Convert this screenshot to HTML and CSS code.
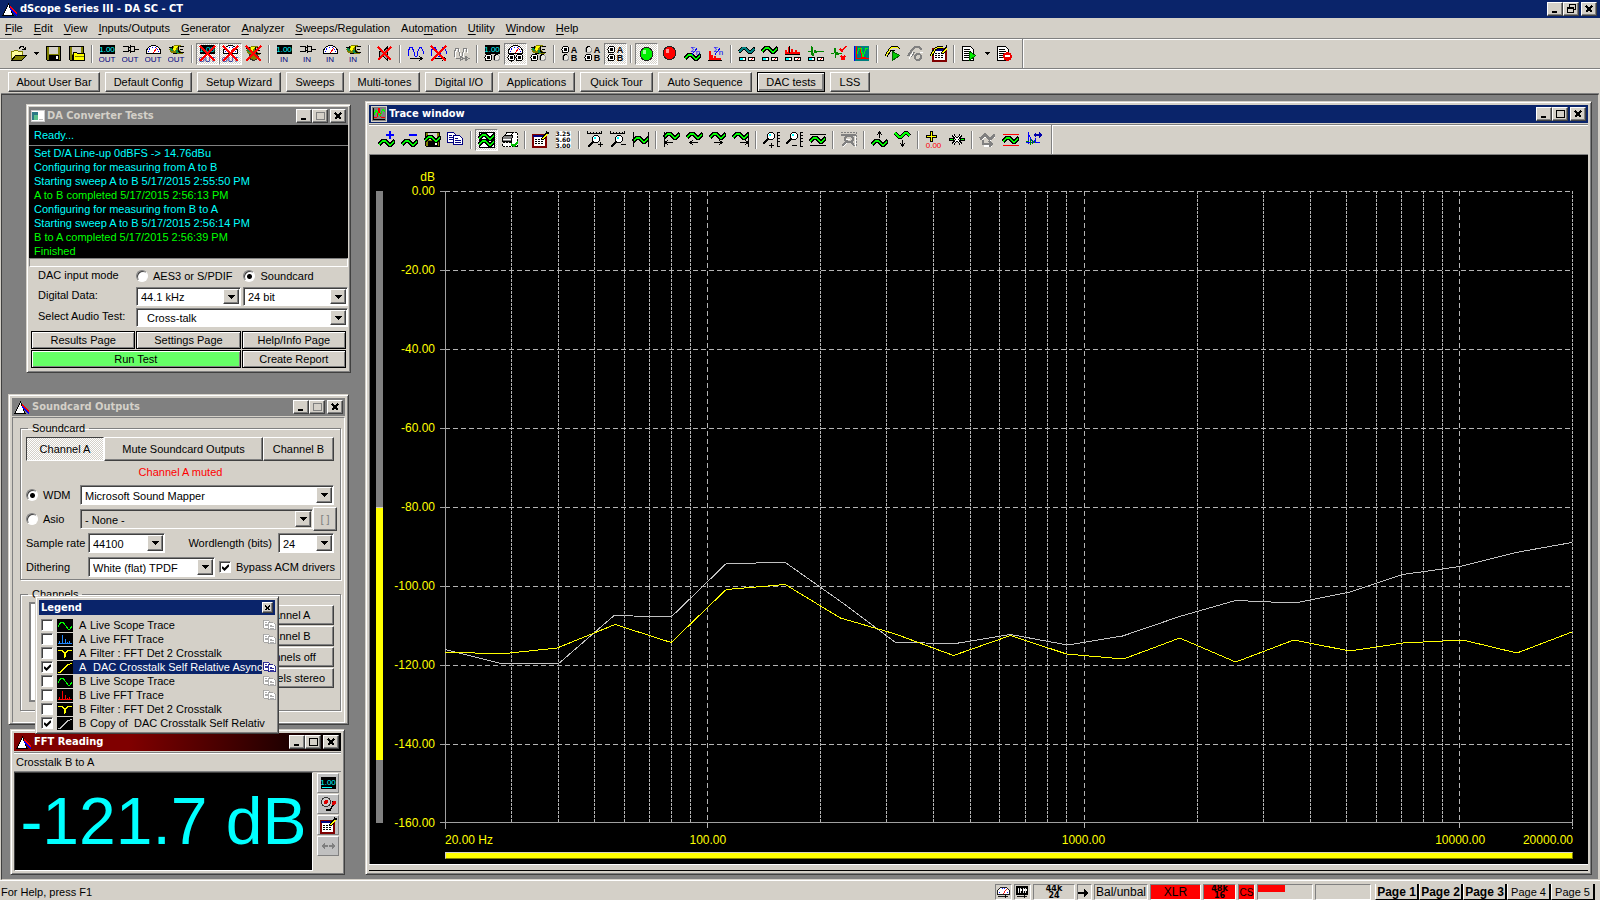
FILE: index.html
```html
<!DOCTYPE html>
<html lang="en">
<head>
<meta charset="utf-8">
<title>dScope Series III - DA SC - CT</title>
<link rel="stylesheet" href="styles.css">
</head>
<body>
<svg class="defs" aria-hidden="true">
  <defs>
    <!-- shared pieces -->
    <g id="p-num"><path d="M1 0h15v9H1z"/><text class="t7 cy" x="8" y="7">1.00</text></g>
    <g id="p-cable" fill="none" stroke="#000"><path d="M1 1.500h5v3M1 6.500h5v-2M6 2.500h2M6 5.500h2M8.500 0v8M8.500 1.500h4v5h-4M12.500 4.500h4"/></g>
    <g id="p-gauge"><path fill="#fff" stroke="#000" d="M1.500 8.500v-3l1-2l2-2l3-1h2l3 1l2 2l1 2v3z"/><path fill="none" stroke="#00f" stroke-dasharray="1 2" d="M3.500 7v-2l3-2.500h4l3 2.500v2"/><path stroke="#f00" d="M8 8l4-5"/></g>
    <g id="p-fish"><path fill="#808000" d="M1 4l3-3 4-1h5l-2 3 1 3 3 3H7L3 8z"/><path fill="#ff0" d="M6 1h4l-2 3-1 3-2-2z"/><path fill="#0a8a4a" d="M1 4l3-2 1 3-1 2zM8 5h3v3H8z"/><path fill="none" stroke="#000" d="M1 2.500h3M4 1v3M11 1l-1 4 2 3M12 1.500h4M12 4.500h3M12 7.500h4M5 8.500h4"/></g>
    <g id="p-x" fill="none" stroke="#f00" stroke-width="1.500"><path d="M1 1l15 15M16 1L1 16"/></g>
    <g id="p-on"><circle cx="4.500" cy="4.500" r="3.500" fill="#fff" stroke="#000"/><circle cx="4.500" cy="4.500" r="1.500"/></g>
    <g id="p-off"><circle cx="4.500" cy="4.500" r="3" fill="#e8e6e0" stroke="#999"/><path fill="none" stroke="#000" d="M2 6.500v-3l2-2h2"/></g>
    <g id="p-wave"><path fill="none" stroke="#000" stroke-width="4" d="M1 9.500l4-4h2l4 4h2l4-4"/><path fill="none" stroke="#0f0" stroke-width="2" d="M1 9.500l4-4h2l4 4h2l3-3"/></g>
    <g id="p-two"><path fill="#fff" stroke="#000" d="M1.500 12.500h6v3h-6zM10.500 12.500h6v3h-6z"/><path fill="#0ff" d="M2 13h3v2H2z"/><path stroke="#f00" d="M13 15l2-2"/></g>
    <g id="p-sig"><text x="9" y="7" class="t8 sig">Σ</text><path fill="none" stroke="#00f" d="M8 9.500l5-6"/><text x="14" y="10" class="t8 sig">n</text></g>
    <g id="p-lens"><path fill="#fff" stroke="#000" d="M6.500 6.500l2-2h3l2 2v3l-2 2h-3l-2-2z"/><path fill="#0ff" d="M8 6h2v2H8z"/><path stroke="#000" stroke-width="2" d="M7 11l-5 5"/></g>
    <g id="p-page"><path fill="#fff" stroke="#000" d="M1.500 1.500h8l3 3v11h-11z"/><path stroke="#000" d="M3 4.500h6M3 6.500h7M3 8.500h7M3 10.500h7M3 12.500h7"/></g>
    <g id="p-copy" fill="#fff" stroke="currentColor"><path d="M.5 1.500h6l2 2v8h-8z"/><path d="M2 4.500h3M2 6.500h5M2 8.500h5"/><path d="M6.500 4.500h6l3 3v6h-9z"/><path d="M8 7.500h3M8 9.500h6M8 11.500h6"/></g>
    <g id="p-notes"><path fill="#fff" stroke="#800000" stroke-width="2" d="M1 4h13v12H1z"/><path fill="#000080" d="M1 4h13v2H1z"/><path fill="none" stroke="#000" stroke-dasharray="2 1" d="M3 8.500h9M3 10.500h9M3 12.500h9"/><path stroke="#000" stroke-width="3" d="M10 9l6-8"/><path stroke="#ff0" stroke-width="1.500" d="M11 8l4-5"/></g>
    <!-- main toolbar -->
    <symbol id="open" viewBox="0 0 17 17"><path fill="#ffff9c" stroke="#808000" d="M1.500 14.500v-8h2l1-1h3l1 1h4v3"/><path fill="#808000" stroke="#000" d="M1.500 15.500l4-5h11l-5 5z"/><path fill="none" stroke="#000" d="M9 3.500l2-2h2l2 3M12 4.500h3.500V2"/></symbol>
    <symbol id="save" viewBox="0 0 17 17"><path fill="#808000" stroke="#000" d="M1.500 1.500h14v14h-13l-1-1z"/><path fill="#d4d0c8" d="M4 2h9v7H4z"/><path d="M4 10h10v5H4z"/><path fill="#fff" d="M11 11h2v3h-2z"/></symbol>
    <symbol id="saveall" viewBox="0 0 17 17"><use href="#save"/><path fill="#ff0" stroke="#000" d="M5.500 15.500v-8h3l1 1h7v7z"/><path stroke="#808000" d="M7 11.500h9"/></symbol>
    <symbol id="num-out" viewBox="0 0 17 17"><use href="#p-num"/><text class="t7 nv" x="8" y="17">OUT</text></symbol>
    <symbol id="cable-out" viewBox="0 0 17 17"><use href="#p-cable"/><text class="t7 nv" x="8" y="17">OUT</text></symbol>
    <symbol id="gauge-out" viewBox="0 0 17 17"><use href="#p-gauge"/><text class="t7 nv" x="8" y="17">OUT</text></symbol>
    <symbol id="fish-out" viewBox="0 0 17 17"><use href="#p-fish"/><text class="t7 nv" x="8" y="17">OUT</text></symbol>
    <symbol id="num-x" viewBox="0 0 17 17"><use href="#num-out"/><use href="#p-x"/></symbol>
    <symbol id="gauge-x" viewBox="0 0 17 17"><use href="#gauge-out"/><use href="#p-x"/></symbol>
    <symbol id="fish-x" viewBox="0 0 17 17"><use href="#p-fish" y="1"/><path fill="#808000" stroke="#333" d="M4.500 9.500h8l1 4-5 2-4-2z"/><use href="#p-x"/></symbol>
    <symbol id="num-in" viewBox="0 0 17 17"><use href="#p-num"/><text class="t7 nv" x="8" y="17">IN</text></symbol>
    <symbol id="cable-in" viewBox="0 0 17 17"><use href="#p-cable"/><text class="t7 nv" x="8" y="17">IN</text></symbol>
    <symbol id="gauge-in" viewBox="0 0 17 17"><use href="#p-gauge"/><text class="t7 nv" x="8" y="17">IN</text></symbol>
    <symbol id="fish-in" viewBox="0 0 17 17"><use href="#p-fish"/><text class="t7 nv" x="8" y="17">IN</text></symbol>
    <symbol id="mute" viewBox="0 0 17 17"><path fill="#999" stroke="#000" d="M3.500 6.500h4l4-5v14l-4-4h-4z"/><path fill="none" stroke="#f00" stroke-width="1.500" d="M2 2l13 13M15 2L2 15"/></symbol>
    <symbol id="sine" viewBox="0 0 17 17"><path fill="none" stroke="#00f" d="M1 11V7l2-5h2l2 5 1 4h2l1-5 2-4h1l2 4v3"/><path fill="none" stroke="#000" d="M3 13.500h11M12 11l3 2.500-3 2.500"/></symbol>
    <symbol id="sine-x" viewBox="0 0 17 17"><use href="#sine"/><use href="#p-x"/></symbol>
    <symbol id="sine-off" viewBox="0 0 17 17"><path fill="none" stroke="#fff" d="M2 13V9l2-5h2l1 4 1 4h2l2-8h2l1 4"/><path fill="none" stroke="#808080" d="M1 12V8l2-5h2l1 4 1 4h2l2-8h2l1 4M3 13.500h5M10 13.500h4M7 11l3 2.500-3 2.500zM12 11l4 2.500-4 2.500z"/></symbol>
    <symbol id="num-sel" viewBox="0 0 17 17"><use href="#p-num"/><use href="#p-on" y="8"/><use href="#p-off" x="8" y="8"/></symbol>
    <symbol id="gauge-sel" viewBox="0 0 17 17"><use href="#p-gauge"/><use href="#p-on" y="8"/><use href="#p-on" x="8" y="8"/></symbol>
    <symbol id="fish-sel" viewBox="0 0 17 17"><use href="#p-fish"/><use href="#p-on" y="8"/><use href="#p-off" x="8" y="8"/></symbol>
    <symbol id="ab-a" viewBox="0 0 17 17"><use href="#p-on"/><use href="#p-off" y="8"/><text class="ab" x="13" y="8">A</text><text class="ab" x="13" y="16">B</text></symbol>
    <symbol id="ab-b" viewBox="0 0 17 17"><use href="#p-off"/><use href="#p-on" y="8"/><text class="ab" x="13" y="8">A</text><text class="ab" x="13" y="16">B</text></symbol>
    <symbol id="ab-both" viewBox="0 0 17 17"><use href="#p-on"/><use href="#p-on" y="8"/><text class="ab" x="13" y="8">A</text><text class="ab" x="13" y="16">B</text></symbol>
    <symbol id="led-green" viewBox="0 0 17 17"><circle cx="8.500" cy="9" r="6.500" fill="#00f000" stroke="#222"/><circle cx="6.500" cy="7" r="2" fill="#9f9"/></symbol>
    <symbol id="led-red" viewBox="0 0 17 17"><circle cx="8.500" cy="8" r="6.500" fill="#f00" stroke="#222"/><circle cx="6.500" cy="6" r="2" fill="#f99"/></symbol>
    <symbol id="sig-wave" viewBox="0 0 17 17"><use href="#p-wave" y="4"/><use href="#p-sig"/></symbol>
    <symbol id="sig-fft" viewBox="0 0 17 17"><path fill="none" stroke="#f00" stroke-width="2" d="M3 15V6M3 14h11M5 14v-4M8 14v-3"/><path stroke="#000" d="M1 15.500h14"/><use href="#p-sig"/></symbol>
    <symbol id="tr-scope" viewBox="0 0 17 17"><path fill="none" stroke="#000" stroke-width="3" d="M1 7l4-4h2l4 4h2l4-4"/><path fill="none" stroke="#008080" stroke-width="2" d="M1 7l4-4h2l4 4h2l3-3"/><use href="#p-two"/></symbol>
    <symbol id="tr-live" viewBox="0 0 17 17"><use href="#p-wave" y="-3"/><use href="#p-two"/></symbol>
    <symbol id="tr-fft" viewBox="0 0 17 17"><path fill="none" stroke="#f00" stroke-width="2" d="M2 8V5M5 8V2M8 8V4M12 8V5M1 8h15"/><path stroke="#000" d="M1 9.500h15M5.500 1v7"/><use href="#p-two"/></symbol>
    <symbol id="tr-imp" viewBox="0 0 17 17"><path fill="none" stroke="#080" d="M1 6.500h3l1-5 1 9 2-5 1 2 1-1h7M4.500 1v9"/><use href="#p-two"/></symbol>
    <symbol id="tr-lim" viewBox="0 0 17 17"><path fill="none" stroke="#080" d="M1 8.500h3l1-5v9l2-5 1 2 1-1h3M5.500 3v9"/><path fill="none" stroke="#f00" stroke-width="1.500" d="M10 4l2 2 4-5M11 11l4 4M15 11l-4 4"/></symbol>
    <symbol id="tr-plot" viewBox="0 0 17 17"><path fill="#008080" d="M1 1h15v15H1z"/><path fill="none" stroke="#f00" d="M3.500 1v12.500h12M7.500 2l1 11 4-1"/><path fill="none" stroke="#0f0" d="M4 9l2-6h2l2 9 3-9h2"/><path stroke="#00f" d="M1.500 1v15"/></symbol>
    <symbol id="sweep-go" viewBox="0 0 17 17"><path fill="none" stroke="#000" d="M1 11l4-7 3-3h5l3 3M3 12l4-7h4"/><path fill="none" stroke="#ff0" d="M2 11l4-7 3-2h4l2 2"/><path fill="#0c0" stroke="#060" d="M8.500 6.500l7 4-7 5z"/></symbol>
    <symbol id="sweep-off" viewBox="0 0 17 17"><path fill="none" stroke="#808080" stroke-width="2" d="M1 11l4-6 3-3h4l3 3M4 12l3-5"/><circle cx="11" cy="12" r="3" fill="none" stroke="#808080" stroke-width="2"/><path stroke="#fff" d="M2 14l4-7M13 7h3"/></symbol>
    <symbol id="sweep-set" viewBox="0 0 17 17"><use href="#p-notes" x="2"/><path fill="none" stroke="#000" stroke-width="3" d="M1 11l4-7 4-2h4"/><path fill="none" stroke="#ff0" d="M1 11l4-7 4-2h4"/></symbol>
    <symbol id="script-go" viewBox="0 0 17 17"><use href="#p-page"/><path fill="#0e0" stroke="#060" d="M8.500 6.500l6 4-6 5z"/></symbol>
    <symbol id="script-stop" viewBox="0 0 17 17"><use href="#p-page"/><circle cx="11.500" cy="11.500" r="4.500" fill="#e00"/><path fill="#fff" d="M9 10h5v2H9z"/></symbol>
    <!-- trace toolbar -->
    <symbol id="w-add" viewBox="0 0 17 17"><use href="#p-wave" y="4"/><path fill="#00f" d="M11 0h2v8h-2zM8 3h8v2H8z"/></symbol>
    <symbol id="w-sub" viewBox="0 0 17 17"><use href="#p-wave" y="4"/><path fill="#00f" d="M8 3h8v2H8z"/></symbol>
    <symbol id="w-save" viewBox="0 0 17 17"><use href="#save"/><use href="#p-wave"/></symbol>
    <symbol id="w-copy" viewBox="0 0 17 17"><use href="#p-copy"/></symbol>
    <symbol id="w-show" viewBox="0 0 17 17"><path fill="#fff" stroke="#000" d="M1.500 1.500h15v15h-15z"/><use href="#p-wave" y="-2"/><use href="#p-wave" y="4"/></symbol>
    <symbol id="w-print" viewBox="0 0 17 17"><path fill="#fff" stroke="#000" stroke-dasharray="2 1" d="M10.500 1.500h6v14h-15v-4h9z"/><path fill="#808080" stroke="#000" d="M1.500 6.500l2-2h8l-1 6h-9z"/><path fill="#fff" stroke="#000" d="M4.500 4.500l1-3h6l-1 3z"/><path stroke="#fff" d="M2 8.500h8"/><path fill="none" stroke="#0b0" stroke-width="2" d="M10 13l3 2 4-4"/></symbol>
    <symbol id="w-notes" viewBox="0 0 17 17"><use href="#p-notes"/></symbol>
    <symbol id="w-digits" viewBox="0 0 17 17"><path fill="#fff" d="M1 0h15v17H1z"/><text class="t7b" x="8" y="5">3.25</text><text class="t7b" x="8" y="11">5.60</text><text class="t7b" x="8" y="17">3.00</text></symbol>
    <symbol id="zx-in" viewBox="0 0 17 17"><path fill="none" stroke="#000" d="M1 2.500h15M1.500 0v3M4.500 1v2M7.500 1v2M10.500 1v2M13.500 1v2M15.500 0v3M12 13.500h5M14.500 11v5"/><use href="#p-lens"/></symbol>
    <symbol id="zx-out" viewBox="0 0 17 17"><path fill="none" stroke="#000" d="M1 2.500h15M1.500 0v3M4.500 1v2M7.500 1v2M10.500 1v2M13.500 1v2M15.500 0v3M12 13.500h5"/><use href="#p-lens"/></symbol>
    <symbol id="fit-x" viewBox="0 0 17 17"><use href="#p-wave" y="1"/><path stroke="#000" d="M1.500 1v15M16.500 1v15"/></symbol>
    <symbol id="go-first" viewBox="0 0 17 17"><use href="#p-wave" y="-3"/><path fill="none" stroke="#000" d="M1.500 1v15M2 11.500h8M5 9l-3 2.500L5 14"/></symbol>
    <symbol id="go-left" viewBox="0 0 17 17"><use href="#p-wave" y="-3"/><path fill="none" stroke="#000" d="M4 11.500h8M7 9l-3 2.500L7 14"/></symbol>
    <symbol id="go-right" viewBox="0 0 17 17"><use href="#p-wave" y="-3"/><path fill="none" stroke="#000" d="M5 11.500h8M10 9l3 2.500-3 2.500"/></symbol>
    <symbol id="go-last" viewBox="0 0 17 17"><use href="#p-wave" y="-3"/><path fill="none" stroke="#000" d="M16.500 1v15M8 11.500h8M13 9l3 2.500-3 2.500"/></symbol>
    <symbol id="zy-in" viewBox="0 0 17 17"><path fill="none" stroke="#000" d="M17 1.500h-2.500v14H17M15 4.500h2M15 7.500h2M15 10.500h2M6 14.500h5M8.500 12v5"/><use href="#p-lens" x="-2" y="-3"/></symbol>
    <symbol id="zy-out" viewBox="0 0 17 17"><path fill="none" stroke="#000" d="M17 1.500h-2.500v14H17M15 4.500h2M15 7.500h2M15 10.500h2M6 14.500h5"/><use href="#p-lens" x="-2" y="-3"/></symbol>
    <symbol id="fit-y" viewBox="0 0 17 17"><use href="#p-wave" y="1"/><path stroke="#000" d="M1 3.500h16M1 14.500h16"/></symbol>
    <symbol id="z-off" viewBox="0 0 17 17"><path fill="none" stroke="#fff" d="M3 16l5-5M6 8h4M15 5v11"/><path fill="none" stroke="#808080" stroke-dasharray="2 1" d="M1 1.500h15.500v14"/><path fill="none" stroke="#808080" stroke-width="2" d="M1 4h15M2 15l5-5M5 7l2-2h4l2 2v2l-2 2H8L5 9zM11 10l3 5"/></symbol>
    <symbol id="w-up" viewBox="0 0 17 17"><use href="#p-wave" y="4"/><path fill="none" stroke="#000" d="M8.500 1v6M6 4l2.500-3L11 4"/></symbol>
    <symbol id="w-down" viewBox="0 0 17 17"><path fill="none" stroke="#000" stroke-width="4" d="M1 2l4 4h2l4-4h2l3 3"/><path fill="none" stroke="#0f0" stroke-width="2" d="M1 2l4 4h2l4-4h2l3 3"/><path fill="none" stroke="#000" d="M8.500 9v6M6 12l2.500 3 2.500-3"/></symbol>
    <symbol id="cur-val" viewBox="0 0 17 17"><path fill="#ff0" stroke="#000" d="M5.500.5h2v4h4v2h-4v4h-2v-4h-4v-2h4z"/><text class="t8 rd" x="8.500" y="17">0.00</text></symbol>
    <symbol id="cur-mid" viewBox="0 0 17 17"><path fill="#0f0" stroke="#000" d="M1.500 7.500h4v2h-4zM12.500 7.500h4v2h-4z"/><path fill="none" stroke="#000" stroke-width="3" d="M5 4l8 9M13 4l-8 9"/><path fill="none" stroke="#fff" d="M5 4l8 9M13 4l-8 9"/></symbol>
    <symbol id="reg-off" viewBox="0 0 17 17"><path fill="none" stroke="#fff" stroke-width="2" d="M2 9l4-4 5 4 5-4M5 15h8"/><path fill="none" stroke="#808080" stroke-width="3" d="M1 8l5-4 5 4 5-4"/><path fill="none" stroke="#808080" stroke-width="2" d="M4 9v4h8M10 10l3 3-3 3"/></symbol>
    <symbol id="w-limits" viewBox="0 0 17 17"><use href="#p-wave" y="1"/><path stroke="#f00" d="M1 3.500h16M1 14.500h16"/></symbol>
    <symbol id="w-window" viewBox="0 0 17 17"><path fill="none" stroke="#00f" d="M3.500 1v12M3 2l3 6 2 4 2-3v3M1 11.500h14"/><path fill="none" stroke="#080" d="M5.500 8v6M7.500 9v4M9.500 10v2M1 10.500h3"/><path fill="#00a" d="M8 4l3-3v2h3V1l3 3-3 3V5h-3v2z"/></symbol>
    <!-- legend thumbnails -->
    <symbol id="th-scope" viewBox="0 0 16 13"><path d="M0 0h16v13H0z"/><path fill="none" stroke="currentColor" d="M1 8l3-5h2l5 7h2l2-3"/></symbol>
    <symbol id="th-fft" viewBox="0 0 16 13"><path d="M0 0h16v13H0z"/><path fill="none" stroke="currentColor" d="M1 10.500h14M2.500 8v3M5.500 2v9M8.500 6v5M10.500 9v2M12.500 8v3"/></symbol>
    <symbol id="th-filter" viewBox="0 0 16 13"><path d="M0 0h16v13H0z"/><path fill="none" stroke="currentColor" d="M1 3.500h4l2 2 1 5 1-5 2-2h4"/></symbol>
    <symbol id="th-ramp" viewBox="0 0 16 13"><path d="M0 0h16v13H0z"/><path fill="none" stroke="currentColor" d="M1 11.500h2l8-8 4-1"/></symbol>
    <!-- window furniture -->
    <symbol id="logo" viewBox="0 0 16 13"><path fill="#fff" stroke="#000" d="M1 12.500L6.500 1 11 12.500z"/><path stroke="#f00" stroke-width="1.500" d="M8 4l7 6"/><path stroke="#00f" stroke-width="1.500" d="M8 6l7 6"/></symbol>
    <symbol id="min" viewBox="0 0 12 10"><path d="M3 7h5v2H3z"/></symbol>
    <symbol id="max" viewBox="0 0 12 10"><path fill="none" stroke="currentColor" d="M2.500 1.500h8v7h-8zM2 1h9"/></symbol>
    <symbol id="restore" viewBox="0 0 12 10"><path fill="none" stroke="#000" d="M4.500 3V.5h6v5H9M2.500 4.500h6v4h-6zM2 3.500h7"/></symbol>
    <symbol id="close" viewBox="0 0 12 10"><path fill="none" stroke="#000" stroke-width="1.500" d="M3 2l6 6M9 2L3 8"/></symbol>
    <symbol id="down" viewBox="0 0 7 4"><path d="M0 0h7L3.500 4z"/></symbol>
    <symbol id="plot-icon" viewBox="0 0 16 16"><path fill="#808080" stroke="#d4d0c8" d="M.5.5h15v15H.5z"/><path fill="none" stroke="#000" d="M2.500 2v11.500H14"/><path fill="none" stroke="#f00" d="M3 11h3l2-9 2 9h4"/><path fill="none" stroke="#0f0" d="M3 9l2-5 4 6 3-7 2 3"/></symbol>
    <symbol id="app-icon" viewBox="0 0 14 12"><path fill="#fff" stroke="#ccc" d="M.5.5h13v11H.5z"/><path fill="#2b7a86" d="M1 2h6v8H1z"/><path fill="#5ac08c" d="M3 5h4v5H3z"/><path fill="#bbb" d="M8 9h4v1H8z"/></symbol>
    <symbol id="bell" viewBox="0 0 17 17"><circle cx="6" cy="6" r="4.500" fill="#ccc" stroke="#333"/><circle cx="6" cy="6" r="2" fill="#d00"/><path fill="none" stroke="#000" stroke-width="1.500" d="M6 14h4l3-5V5"/><circle cx="14" cy="7" r="2" fill="#d00"/></symbol>
    <symbol id="arrows" viewBox="0 0 17 17"><path fill="#808080" d="M1 8l4-3v2h3v2H5v2zM16 8l-4-3v2H9v2h3v2z"/></symbol>
    <symbol id="dig" viewBox="0 0 17 17"><path d="M1 2h15v12H1z"/><text class="t7 cy" x="8" y="10">1.00</text><path stroke="#0ff" d="M2 12.500h10"/></symbol>
    <symbol id="st-gauge" viewBox="0 0 16 16"><use href="#p-gauge" y="2"/><path stroke="#000" d="M2 13.500h12M11 11v4"/></symbol>
    <symbol id="st-num" viewBox="0 0 16 16"><path d="M1 1h14v10H1z"/><path stroke="#fff" stroke-width="2" stroke-dasharray="2 1" d="M3 6h11"/><path stroke="#fff" d="M3.500 3v6M6.500 3v6M9.500 3v6M12.500 3v6"/><path stroke="#000" d="M2 13.500h12M11 11v4"/></symbol>
    <symbol id="st-arrow" viewBox="0 0 12 12"><path d="M0 5h6V2l5 4-5 4V7H0z"/></symbol>
  </defs>
</svg>

<header class="titlebar app-title">
  <svg class="logo"><use href="#logo"/></svg><h1>dScope Series III - DA SC - CT</h1>
  <div class="winbtns"><button aria-label="Minimize"><svg><use href="#min"/></svg></button><button aria-label="Restore"><svg><use href="#restore"/></svg></button><button class="x" aria-label="Close"><svg><use href="#close"/></svg></button></div>
</header>

<nav class="menu">
  <button><u>F</u>ile</button><button><u>E</u>dit</button><button><u>V</u>iew</button><button><u>I</u>nputs/Outputs</button><button><u>G</u>enerator</button><button><u>A</u>nalyzer</button><button><u>S</u>weeps/Regulation</button><button>Auto<u>m</u>ation</button><button><u>U</u>tility</button><button><u>W</u>indow</button><button><u>H</u>elp</button>
</nav>

<div class="toolbar main-tools">
  <button class="tb" aria-label="Open"><svg><use href="#open"/></svg></button><button class="tb drop" aria-label="Open recent"><svg><use href="#down"/></svg></button><button class="tb" aria-label="Save"><svg><use href="#save"/></svg></button><button class="tb" aria-label="Save all"><svg><use href="#saveall"/></svg></button><i></i>
  <button class="tb" aria-label="Digital outputs"><svg><use href="#num-out"/></svg></button><button class="tb" aria-label="Analogue outputs"><svg><use href="#cable-out"/></svg></button><button class="tb" aria-label="Output meter"><svg><use href="#gauge-out"/></svg></button><button class="tb" aria-label="Output carrier"><svg><use href="#fish-out"/></svg></button><i></i>
  <button class="tb on" aria-label="Mute digital"><svg><use href="#num-x"/></svg></button><button class="tb on" aria-label="Mute analogue"><svg><use href="#gauge-x"/></svg></button><button class="tb" aria-label="Mute carrier"><svg><use href="#fish-x"/></svg></button><i></i>
  <button class="tb" aria-label="Digital inputs"><svg><use href="#num-in"/></svg></button><button class="tb" aria-label="Analogue inputs"><svg><use href="#cable-in"/></svg></button><button class="tb" aria-label="Input meter"><svg><use href="#gauge-in"/></svg></button><button class="tb" aria-label="Input carrier"><svg><use href="#fish-in"/></svg></button><i></i>
  <button class="tb" aria-label="Monitor mute"><svg><use href="#mute"/></svg></button><i></i>
  <button class="tb" aria-label="Generator"><svg><use href="#sine"/></svg></button><button class="tb" aria-label="Generator off"><svg><use href="#sine-x"/></svg></button><button class="tb" aria-label="Next"><svg><use href="#sine-off"/></svg></button><i></i>
  <button class="tb" aria-label="Analyze digital"><svg><use href="#num-sel"/></svg></button><button class="tb on" aria-label="Analyze analogue"><svg><use href="#gauge-sel"/></svg></button><button class="tb" aria-label="Analyze carrier"><svg><use href="#fish-sel"/></svg></button><i></i>
  <button class="tb" aria-label="Channel A"><svg><use href="#ab-a"/></svg></button><button class="tb" aria-label="Channel B"><svg><use href="#ab-b"/></svg></button><button class="tb on" aria-label="Both channels"><svg><use href="#ab-both"/></svg></button><i></i>
  <button class="tb on" aria-label="Run"><svg><use href="#led-green"/></svg></button><button class="tb" aria-label="Stop"><svg><use href="#led-red"/></svg></button><button class="tb" aria-label="Average scope"><svg><use href="#sig-wave"/></svg></button><button class="tb" aria-label="Average FFT"><svg><use href="#sig-fft"/></svg></button><i></i>
  <button class="tb" aria-label="Signal"><svg><use href="#tr-scope"/></svg></button><button class="tb" aria-label="Scope trace"><svg><use href="#tr-live"/></svg></button><button class="tb" aria-label="FFT trace"><svg><use href="#tr-fft"/></svg></button><button class="tb" aria-label="Impulse"><svg><use href="#tr-imp"/></svg></button><button class="tb" aria-label="Limits"><svg><use href="#tr-lim"/></svg></button><button class="tb" aria-label="Trace window"><svg><use href="#tr-plot"/></svg></button><i></i>
  <button class="tb" aria-label="Start sweep"><svg><use href="#sweep-go"/></svg></button><button class="tb" aria-label="Stop sweep"><svg><use href="#sweep-off"/></svg></button><button class="tb" aria-label="Sweep settings"><svg><use href="#sweep-set"/></svg></button><i></i>
  <button class="tb" aria-label="Run script"><svg><use href="#script-go"/></svg></button><button class="tb drop" aria-label="Recent scripts"><svg><use href="#down"/></svg></button><button class="tb" aria-label="Stop script"><svg><use href="#script-stop"/></svg></button><i class="end"></i>
</div>

<div class="userbar">
  <button class="w92">About User Bar</button><button class="w87">Default Config</button><button class="w84">Setup Wizard</button><button class="w58">Sweeps</button><button class="w71">Multi-tones</button><button class="w68">Digital I/O</button><button class="w77">Applications</button><button class="w73">Quick Tour</button><button class="w94">Auto Sequence</button><button class="w68 default">DAC tests</button><button class="w40">LSS</button>
</div>

<main class="mdi">
  <section class="win trace">
    <div class="titlebar active"><svg class="ic16"><use href="#plot-icon"/></svg><h2>Trace window</h2>
      <div class="winbtns"><button aria-label="Minimize"><svg><use href="#min"/></svg></button><button aria-label="Maximize"><svg><use href="#max"/></svg></button><button class="x" aria-label="Close"><svg><use href="#close"/></svg></button></div></div>
    <div class="toolbar trace-tools">
      <button class="tb" aria-label="Add trace"><svg><use href="#w-add"/></svg></button><button class="tb" aria-label="Remove trace"><svg><use href="#w-sub"/></svg></button><button class="tb" aria-label="Save trace"><svg><use href="#w-save"/></svg></button><button class="tb navy" aria-label="Copy trace"><svg><use href="#w-copy"/></svg></button><i></i>
      <button class="tb on" aria-label="Legend"><svg><use href="#w-show"/></svg></button><button class="tb" aria-label="Print"><svg><use href="#w-print"/></svg></button><i></i>
      <button class="tb" aria-label="Settings"><svg><use href="#w-notes"/></svg></button><button class="tb" aria-label="Values"><svg><use href="#w-digits"/></svg></button><i></i>
      <button class="tb" aria-label="Zoom in X"><svg><use href="#zx-in"/></svg></button><button class="tb" aria-label="Zoom out X"><svg><use href="#zx-out"/></svg></button><button class="tb" aria-label="Fit X"><svg><use href="#fit-x"/></svg></button><i></i>
      <button class="tb" aria-label="Far left"><svg><use href="#go-first"/></svg></button><button class="tb" aria-label="Left"><svg><use href="#go-left"/></svg></button><button class="tb" aria-label="Right"><svg><use href="#go-right"/></svg></button><button class="tb" aria-label="Far right"><svg><use href="#go-last"/></svg></button><i></i>
      <button class="tb" aria-label="Zoom in Y"><svg><use href="#zy-in"/></svg></button><button class="tb" aria-label="Zoom out Y"><svg><use href="#zy-out"/></svg></button><button class="tb" aria-label="Fit Y"><svg><use href="#fit-y"/></svg></button><i></i>
      <button class="tb" aria-label="Zoom area"><svg><use href="#z-off"/></svg></button><i></i>
      <button class="tb" aria-label="Move up"><svg><use href="#w-up"/></svg></button><button class="tb" aria-label="Move down"><svg><use href="#w-down"/></svg></button><i></i>
      <button class="tb" aria-label="Cursor value"><svg><use href="#cur-val"/></svg></button><button class="tb" aria-label="Centre cursor"><svg><use href="#cur-mid"/></svg></button><i></i>
      <button class="tb" aria-label="Regulate"><svg><use href="#reg-off"/></svg></button><button class="tb" aria-label="Limit lines"><svg><use href="#w-limits"/></svg></button><button class="tb" aria-label="Window function"><svg><use href="#w-window"/></svg></button><i class="end"></i>
    </div>
    <div class="plot">
      <div class="yslider"><span></span></div>
      <div class="yaxis"><b class="unit">dB</b><span>0.00</span><span>-20.00</span><span>-40.00</span><span>-60.00</span><span>-80.00</span><span>-100.00</span><span>-120.00</span><span>-140.00</span><span>-160.00</span></div>
      <svg class="chart" viewBox="0 0 1127 632" preserveAspectRatio="none" role="img" aria-label="Crosstalk against frequency">
        <path class="grid minor" d="M66.500 0v632M113.500 0v632M149.500 0v632M179.500 0v632M204.500 0v632M226.500 0v632M245.500 0v632M375.500 0v632M441.500 0v632M488.500 0v632M525.500 0v632M554.500 0v632M579.500 0v632M601.500 0v632M620.500 0v632M751.500 0v632M817.500 0v632M864.500 0v632M900.500 0v632M930.500 0v632M955.500 0v632M977.500 0v632M996.500 0v632M1126.500 0v638"/>
        <path class="grid major" d="M262.500 0v638M638.500 0v638M1013.500 0v638M0 .5h1127M0 79.500h1127M0 158.500h1127M0 237.500h1127M0 316.500h1127M0 395.500h1127M0 474.500h1127M0 553.500h1127"/>
        <path class="axis" d="M.5 0v638M-5 .5H0M-5 79.500H0M-5 158.500H0M-5 237.500H0M-5 316.500H0M-5 395.500H0M-5 474.500H0M-5 553.500H0M-5 631.500h1132"/>
        <polyline class="tr b" points="0,458.500 56,472.500 113,473 169,424.500 226,426 281,372.500 340,371.500 396,411 450,451.500 510,452.500 565,443.500 622,454 677,445 734,425.500 790,409.500 849,412 904,401 957,383.500 1014,375.500 1070,361.500 1126,351.500"/>
        <polyline class="tr a" points="0,461.500 60,462.500 112,457 170,433.500 226,451.500 281,398.500 340,393.500 395,427 450,443 508,464.500 565,444.500 621,463 678,468 734,447 790,471 848,449 904,460 957,452 1017,449 1071,462 1126,441"/>
      </svg>
      <div class="xaxis"><span>20.00 Hz</span><span>100.00</span><span>1000.00</span><span>10000.00</span><span>20000.00</span></div>
      <div class="xslider"></div>
    </div>
    <div class="trace-foot"></div>
  </section>

  <section class="win dac">
    <div class="titlebar"><svg class="ic14"><use href="#app-icon"/></svg><h2>DA Converter Tests</h2>
      <div class="winbtns"><button aria-label="Minimize"><svg><use href="#min"/></svg></button><button class="dim" aria-label="Maximize" disabled><svg><use href="#max"/></svg></button><button class="x" aria-label="Close"><svg><use href="#close"/></svg></button></div></div>
    <div class="log">
      <p class="head">Ready...</p>
      <p>Set D/A Line-up 0dBFS -&gt; 14.76dBu</p><p>Configuring for measuring from A to B</p><p>Starting sweep A to B 5/17/2015 2:55:50 PM</p><p class="ok">A to B completed 5/17/2015 2:56:13 PM</p><p>Configuring for measuring from B to A</p><p>Starting sweep A to B 5/17/2015 2:56:14 PM</p><p class="ok">B to A completed 5/17/2015 2:56:39 PM</p><p class="ok">Finished</p>
    </div>
    <div class="progress"></div>
    <form class="dac-form">
      <span class="lab">DAC input mode</span><div class="radios"><label><input type="radio" name="mode">AES3 or S/PDIF</label><label><input type="radio" name="mode" checked>Soundcard</label></div>
      <label class="lab" for="rate">Digital Data:</label><div class="combo"><select id="rate"><option>44.1 kHz</option></select><span><svg><use href="#down"/></svg></span></div><div class="combo"><select aria-label="Bits"><option>24 bit</option></select><span><svg><use href="#down"/></svg></span></div>
      <label class="lab" for="test">Select Audio Test:</label><div class="combo wide indent"><select id="test"><option>Cross-talk</option></select><span><svg><use href="#down"/></svg></span></div>
    </form>
    <div class="dac-buttons"><button>Results Page</button><button>Settings Page</button><button>Help/Info Page</button><button class="run">Run Test</button><button>Create Report</button></div>
  </section>

  <section class="win sound">
    <div class="titlebar"><svg class="logo"><use href="#logo"/></svg><h2>Soundcard Outputs</h2>
      <div class="winbtns"><button aria-label="Minimize"><svg><use href="#min"/></svg></button><button class="dim" aria-label="Maximize" disabled><svg><use href="#max"/></svg></button><button class="x" aria-label="Close"><svg><use href="#close"/></svg></button></div></div>
    <div class="sound-body">
      <fieldset><legend>Soundcard</legend>
        <div class="mute-row"><button class="down">Channel A</button><button>Mute Soundcard Outputs</button><button>Channel B</button></div>
        <p class="muted">Channel A muted</p>
        <div class="row"><label class="dev"><input type="radio" name="dev" checked>WDM</label><div class="combo grow"><select aria-label="WDM device"><option>Microsoft Sound Mapper</option></select><span><svg><use href="#down"/></svg></span></div></div>
        <div class="row"><label class="dev"><input type="radio" name="dev">Asio</label><div class="combo grow grey"><select aria-label="Asio device"><option>- None -</option></select><span><svg><use href="#down"/></svg></span></div><button class="brk" disabled>[ ]</button></div>
        <div class="row"><label class="cap" for="sr">Sample rate</label><div class="combo c77"><select id="sr"><option>44100</option></select><span><svg><use href="#down"/></svg></span></div><label class="wl" for="wl">Wordlength (bits)</label><div class="combo c56"><select id="wl"><option>24</option></select><span><svg><use href="#down"/></svg></span></div></div>
        <div class="row"><label class="cap" for="di">Dithering</label><div class="combo c127"><select id="di"><option>White (flat) TPDF</option></select><span><svg><use href="#down"/></svg></span></div><label class="chk"><input type="checkbox" checked>Bypass ACM drivers</label></div>
      </fieldset>
      <fieldset><legend>Channels</legend>
        <div class="chan">
          <div class="chan-list"></div>
          <div class="chan-btns"><button>Channel A</button><button>Channel B</button><button>Channels off</button><button>Channels stereo</button></div>
        </div>
      </fieldset>
    </div>
  </section>

  <section class="win fft">
    <div class="titlebar red"><svg class="logo"><use href="#logo"/></svg><h2>FFT Reading</h2>
      <div class="winbtns"><button aria-label="Minimize"><svg><use href="#min"/></svg></button><button aria-label="Maximize"><svg><use href="#max"/></svg></button><button class="x" aria-label="Close"><svg><use href="#close"/></svg></button></div></div>
    <p class="fft-name">Crosstalk B to A</p>
    <div class="fft-body"><output>-121.7 dB</output>
      <div class="fft-side"><button aria-label="Digits"><svg><use href="#dig"/></svg></button><button aria-label="Alarm"><svg><use href="#bell"/></svg></button><button aria-label="Settings"><svg><use href="#w-notes"/></svg></button><button aria-label="Resize"><svg><use href="#arrows"/></svg></button></div></div>
  </section>

  <section class="win legend">
    <div class="titlebar active"><h2>Legend</h2><div class="winbtns small"><button class="x" aria-label="Close"><svg><use href="#close"/></svg></button></div></div>
    <ul>
      <li><label><input type="checkbox"><svg class="th green"><use href="#th-scope"/></svg><b>A</b><span>Live Scope Trace</span></label><svg class="cp" viewBox="0 0 16 15"><use href="#p-copy"/></svg></li>
      <li><label><input type="checkbox"><svg class="th blue"><use href="#th-fft"/></svg><b>A</b><span>Live FFT Trace</span></label><svg class="cp" viewBox="0 0 16 15"><use href="#p-copy"/></svg></li>
      <li><label><input type="checkbox"><svg class="th yellow"><use href="#th-filter"/></svg><b>A</b><span>Filter : FFT Det 2 Crosstalk</span></label></li>
      <li class="sel"><label><input type="checkbox" checked><svg class="th yellow"><use href="#th-ramp"/></svg><b>A</b><span>&nbsp;DAC Crosstalk Self Relative Async</span></label><svg class="cp" viewBox="0 0 16 15"><use href="#p-copy"/></svg></li>
      <li><label><input type="checkbox"><svg class="th green"><use href="#th-scope"/></svg><b>B</b><span>Live Scope Trace</span></label><svg class="cp" viewBox="0 0 16 15"><use href="#p-copy"/></svg></li>
      <li><label><input type="checkbox"><svg class="th redc"><use href="#th-fft"/></svg><b>B</b><span>Live FFT Trace</span></label><svg class="cp" viewBox="0 0 16 15"><use href="#p-copy"/></svg></li>
      <li><label><input type="checkbox"><svg class="th yellow"><use href="#th-filter"/></svg><b>B</b><span>Filter : FFT Det 2 Crosstalk</span></label></li>
      <li><label><input type="checkbox" checked><svg class="th silver"><use href="#th-ramp"/></svg><b>B</b><span>Copy of &nbsp;DAC Crosstalk Self Relativ</span></label></li>
    </ul>
  </section>
</main>

<footer class="status">
  <span class="help">For Help, press F1</span>
  <span class="cell c17"><svg><use href="#st-gauge"/></svg></span><span class="cell c17"><svg><use href="#st-num"/></svg></span><span class="cell c42 two">44k<br>24</span><span class="cell c15"><svg class="ar"><use href="#st-arrow"/></svg></span><span class="cell c54">Bal/unbal</span><span class="cell c51 hot">XLR</span><span class="cell c33 hot two">48k<br>16</span><span class="cell c17 hot cs">CS</span><span class="cell c56"><i></i></span><span class="cell c56"></span>
  <div class="tabs"><button class="cur">Page 1</button><button class="cur">Page 2</button><button class="cur">Page 3</button><button>Page 4</button><button>Page 5</button></div>
</footer>
</body>
</html>
```
FILE: styles.css
```css
:root {
  --face: #d4d0c8;
  --shade: #808080;
  --dark: #404040;
  --navy: #0a246a;
  --check: url("data:image/svg+xml,%3Csvg xmlns='http://www.w3.org/2000/svg' viewBox='0 0 7 7'%3E%3Cpath fill='none' stroke='%23000' stroke-width='2' d='M0 3l2.500 2.500L7 1'/%3E%3C/svg%3E");
}
* { box-sizing: border-box; }
body {
  margin: 0; height: 100vh; display: flex; flex-direction: column; overflow: hidden;
  background: var(--face); color: #000;
  font: 11px/14px "Liberation Sans", Arial, sans-serif;
}
h1, h2, p, ul { margin: 0; padding: 0; font-size: inherit; }
button, select, input { font: inherit; color: inherit; margin: 0; padding: 0; border-radius: 0; white-space: nowrap; }
button { background: var(--face); border: 0; }
svg { display: block; flex: none; overflow: visible; shape-rendering: crispEdges; }
.defs { position: absolute; width: 0; height: 0; }
.t7 { font-size: 8px; text-anchor: middle; font-family: "Liberation Sans", sans-serif; }
.t7b { font: bold 6px "DejaVu Sans", sans-serif; text-anchor: middle; }
.t8 { font: 8px "Liberation Sans", sans-serif; text-anchor: middle; }
.ab { font: bold 9px "Liberation Sans", sans-serif; text-anchor: middle; }
.cy { fill: #0ff; } .nv { fill: #000080; } .sig { fill: #00f; } .rd { fill: #f00; }

/* title bars */
.titlebar { display: flex; align-items: center; height: 18px; gap: 2px; padding: 0 2px; background: var(--shade); color: var(--face); }
.titlebar h1, .titlebar h2 { flex: 1; font: bold 11px/18px "DejaVu Sans Condensed", "DejaVu Sans", sans-serif; white-space: nowrap; }
.titlebar.active, .app-title { background: var(--navy); color: #fff; }
.titlebar.red { background: linear-gradient(90deg, #800000 35%, #000); color: #fff; }
.app-title { padding: 0 3px 0 2px; flex: none; }
.logo { width: 16px; height: 13px; }
.ic16 { width: 16px; height: 16px; }
.ic14 { width: 14px; height: 12px; }
.winbtns { display: flex; }
.winbtns button { width: 16px; height: 14px; border: 1px solid; border-color: #fff var(--dark) var(--dark) #fff; box-shadow: inset -1px -1px var(--shade); padding: 0 1px; color: #000; }
.winbtns svg { width: 12px; height: 10px; }
.winbtns .x { margin-left: 2px; }
.winbtns .dim { color: var(--shade); }
.winbtns.small button { width: 11px; height: 11px; padding: 0; }
.winbtns.small svg { width: 9px; height: 8px; }

.menu { display: flex; height: 20px; flex: none; padding-left: 5px; gap: 11px; }
.menu button { font: 11px/20px "Liberation Sans", sans-serif; }
.menu u { text-underline-offset: 2px; }

.toolbar { display: flex; align-items: center; flex: none; border-top: 1px solid var(--shade); border-bottom: 1px solid var(--shade); box-shadow: inset 0 1px #fff; }
.main-tools { height: 31px; padding-left: 7px; }
.tb { width: 23px; height: 22px; border: 1px solid transparent; display: flex; align-items: center; justify-content: center; flex: none; background: none; }
.tb svg { width: 17px; height: 17px; }
.tb.drop { width: 12px; }
.tb.drop svg { width: 5px; height: 3px; }
.tb.navy { color: #000080; }
.tb.on { border-color: var(--shade) #fff #fff var(--shade); background: repeating-conic-gradient(#fff 0 25%, var(--face) 0 50%) 0 0 / 2px 2px; }
.toolbar i { width: 8px; height: 18px; flex: none; border-left: 3px solid transparent; background: linear-gradient(90deg, var(--shade) 1px, #fff 1px 2px, transparent 2px) padding-box no-repeat; }
.toolbar i.end { height: 100%; margin-left: 3px; }

.userbar { display: flex; flex: none; gap: 5px; height: 25px; padding: 3px 0 0 8px; box-shadow: inset 0 1px #fff; }
.userbar button, .chan-btns button, .mute-row button, .brk { border: 1px solid; border-color: #fff var(--dark) var(--dark) #fff; box-shadow: inset -1px -1px var(--shade); }
.userbar button { height: 20px; }
.userbar .default { outline: 1px solid #000; outline-offset: -1px; border-color: #000; box-shadow: inset 1px 1px #fff, inset -2px -2px var(--shade); }
.w92 { width: 92px; } .w87 { width: 87px; } .w84 { width: 84px; } .w58 { width: 58px; } .w71 { width: 71px; } .w68 { width: 68px; }
.w77 { width: 77px; } .w73 { width: 73px; } .w94 { width: 94px; } .w40 { width: 40px; }

/* desktop area: windows float freely on it */
.mdi { position: relative; flex: 1; background: var(--shade); border: 1px solid; border-color: var(--dark) var(--face) var(--face) var(--dark); box-shadow: 0 -1px var(--shade); margin: 0 1px; }
.win { position: absolute; background: var(--face); border: 1px solid; border-color: var(--face) var(--dark) var(--dark) var(--face); box-shadow: inset 1px 1px #fff, inset -1px -1px var(--shade); padding: 3px; }

.trace { left: 363px; right: 6px; top: 6px; bottom: 4px; display: flex; flex-direction: column; }
.trace-tools { height: 31px; padding-left: 6px; margin-top: 1px; }
.plot { flex: 1; min-height: 0; background: #000; border-left: 1px solid var(--shade); display: grid; grid-template: minmax(0, 1fr) 29px 7px / 7px 62px minmax(0, 1fr); padding: 36px 15px 5px 6px; color: #ff0; font: 12px/14px "Liberation Sans", Arial, sans-serif; }
.yslider { grid-row: 1; grid-column: 1; background: var(--shade); display: grid; grid-template-rows: 50fr 40fr 10fr; }
.yslider span { grid-row: 2; background: #ff0; border-top: 1px solid var(--face); }
.yaxis { grid-row: 1; grid-column: 2; margin-right: 10px; position: relative; display: flex; flex-direction: column; justify-content: space-between; text-align: right; }
.yaxis span { height: 0; line-height: 0; }
.yaxis .unit { position: absolute; right: 0; top: -21px; font-weight: normal; }
.chart { grid-column: 3; grid-row: 1; width: 100%; height: 100%; min-height: 0; }
.chart path, .chart polyline { fill: none; stroke-width: 1; vector-effect: non-scaling-stroke; }
.grid { stroke: #b4b4b4; }
.minor { stroke-dasharray: 3 1; }
.major { stroke-dasharray: 5 3; }
.axis { stroke: #a0a0a0; }
.tr.a { stroke: #ff0; }
.tr.b { stroke: #c0c0c0; }
.xaxis { grid-column: 3; grid-row: 2; position: relative; padding-top: 10px; }
.xaxis span { position: absolute; transform: translateX(-50%); white-space: nowrap; }
.xaxis span:nth-child(1) { left: 0; transform: none; }
.xaxis span:nth-child(2) { left: 23.3%; }
.xaxis span:nth-child(3) { left: 56.6%; }
.xaxis span:nth-child(4) { left: 90%; }
.xaxis span:nth-child(5) { right: 0; transform: none; }
.xslider { grid-column: 3; grid-row: 3; background: #ff0; border: 1px solid; border-color: var(--face) #808000 #808000 var(--face); }
.trace-foot { height: 7px; border-top: 1px solid #fff; border-bottom: 1px solid #000; flex: none; }

/* form pieces */
.combo { display: flex; height: 20px; border: 1px solid; border-color: var(--shade) #fff #fff var(--shade); box-shadow: inset 1px 1px var(--dark); padding: 2px 1px 1px 2px; background: #fff; position: relative; }
.combo select { appearance: none; border: 0; background: none; flex: 1; min-width: 0; padding-left: 2px; outline: 0; }
.combo.indent select { padding-left: 8px; }
.combo > span { position: absolute; right: 1px; top: 1px; bottom: 1px; width: 16px; display: flex; align-items: center; justify-content: center; pointer-events: none; background: var(--face); border: 1px solid; border-color: #fff var(--dark) var(--dark) #fff; box-shadow: inset -1px -1px var(--shade); }
.combo svg { width: 7px; height: 4px; }
.combo.grey { background: var(--face); }
input[type=radio] { appearance: none; width: 12px; height: 12px; border-radius: 50%; border: 1px solid; border-color: var(--shade) #fff #fff var(--shade); box-shadow: inset 1px 1px var(--dark); background: #fff; flex: none; }
input[type=radio]:checked { background: radial-gradient(circle at 55% 55%, #000 0 2px, #fff 3px); }
input[type=checkbox] { appearance: none; width: 12px; height: 12px; border: 1px solid; border-color: var(--shade) #fff #fff var(--shade); box-shadow: inset 1px 1px var(--dark); background: #fff; flex: none; }
input[type=checkbox]:checked { background: #fff var(--check) center / 7px 7px no-repeat; }

.dac { left: 24px; top: 9px; width: 325px; padding: 2px; }
.log { background: #000; color: #0ff; height: 133px; }
.log p { padding-left: 5px; white-space: nowrap; }
.log .head { line-height: 20px; border-bottom: 1px solid var(--shade); }
.log .ok { color: #0f0; }
.progress { height: 9px; border: 1px solid; border-color: var(--shade) #fff #fff var(--shade); }
.dac-form { display: grid; grid-template-columns: 96px 105px 105px; gap: 2px; padding: 0 2px 0 9px; align-items: start; }
.dac-form .combo { height: 19px; }
.radios { grid-column: span 2; display: flex; height: 18px; align-items: center; gap: 11px; }
.radios label { display: flex; align-items: center; gap: 5px; white-space: nowrap; }
.lab { white-space: nowrap; line-height: 17px; }
.wide { grid-column: span 2; }
.dac-buttons { display: grid; grid-template-columns: repeat(3, 1fr); gap: 1px; padding: 4px 2px 2px; }
.dac-buttons button { height: 18px; border: 1px solid #000; box-shadow: inset 1px 1px #fff, inset -1px -1px var(--shade); }
.dac-buttons .run { grid-column: span 2; background: #6f6; }

.sound { left: 6px; top: 299px; width: 341px; height: 331px; }
.sound-body { border: 1px solid; border-color: var(--shade) #fff #fff var(--shade); margin-top: 1px; padding: 2px 3px 0 7px; height: 306px; }
fieldset { margin: 0 0 6px; border: 1px solid var(--shade); box-shadow: 1px 1px #fff, inset 1px 1px #fff; padding: 0 5px; min-width: 0; }
legend { padding: 0 4px; margin-left: 2px; line-height: 16px; }
.mute-row { display: flex; margin-top: 1px; }
.mute-row button { height: 24px; flex: 0 0 71px; }
.mute-row button:first-child { flex-basis: 78px; }
.mute-row button:nth-child(2) { flex: 0 0 159px; }
.mute-row .down { border-color: var(--dark) #fff #fff var(--dark); box-shadow: none; background: repeating-conic-gradient(#fff 0 25%, var(--face) 0 50%) 0 0 / 2px 2px; }
.muted { color: #f00; text-align: center; line-height: 22px; }
.row { display: flex; align-items: center; height: 24px; white-space: nowrap; padding-right: 1px; }
.dev { display: flex; align-items: center; gap: 5px; width: 54px; }
.grow { flex: 1; }
.brk { width: 24px; height: 24px; color: var(--shade); margin-right: -3px; }
.cap { flex: 0 0 62px; }
.c77 { flex: 0 0 77px; } .c127 { flex: 0 0 127px; } .row .c56 { flex: 0 0 56px; }
.wl { flex: 1; text-align: right; padding-right: 6px; }
.chk { display: flex; align-items: center; gap: 5px; margin-left: 4px; }
.chan { display: flex; justify-content: space-between; padding: 0 1px 0 3px; height: 108px; }
.chan-list { width: 200px; height: 100px; background: #fff; border: 2px solid var(--shade); }
.chan-btns { display: flex; flex-direction: column; gap: 1px; width: 98px; padding-top: 3px; }
.chan-btns button { height: 20px; }

.fft { left: 8px; top: 634px; width: 335px; height: 146px; display: flex; flex-direction: column; }
.fft-name { border-top: 1px solid var(--shade); box-shadow: inset 0 1px #fff; margin-top: 1px; line-height: 18px; height: 19px; padding-left: 2px; }
.fft-body { display: flex; flex: 1; gap: 2px; border-top: 1px solid var(--shade); }
.fft-body output { flex: 1; background: #000; color: #0ff; border: 1px solid; border-color: var(--dark) #fff #fff var(--dark); font: 66px/96px "Liberation Sans", Arial, sans-serif; text-align: center; white-space: nowrap; }
.fft-side { width: 26px; padding: 1px 2px; display: flex; flex-direction: column; gap: 1px; }
.fft-side button { height: 20px; background: #c0c0c0; border: 1px solid; border-color: #fff var(--shade) var(--shade) #fff; display: grid; place-items: center; }
.fft-side svg { width: 17px; height: 17px; }

.legend { left: 33px; top: 501px; width: 244px; }
.legend .titlebar { height: 15px; margin: 0 0 3px; }
.legend h2 { line-height: 15px; }
.legend ul { list-style: none; padding: 0 1px 0 2px; }
.legend li { display: flex; align-items: center; height: 14px; }
.legend label { display: flex; align-items: center; flex: 0 0 221px; height: 14px; white-space: nowrap; }
.th { width: 16px; height: 13px; margin-left: 4px; }
.legend b { font-weight: normal; width: 17px; padding-left: 6px; line-height: 14px; }
.legend label span { flex: 1; min-width: 0; line-height: 14px; }
.legend .sel b, .legend .sel label span { background: var(--navy); color: #fff; }
.cp { width: 13px; height: 12px; margin-left: 1px; color: #999; }
.sel .cp { color: #000080; }
.green { color: #0f0; } .blue { color: #28f; } .yellow { color: #ff0; } .redc { color: #f00; } .silver { color: #c0c0c0; }

/* status bar */
.status { display: flex; flex: none; height: 20px; padding: 3px 5px 0 1px; gap: 2px; border-top: 1px solid #fff; overflow: hidden; }
.help { flex: 1; line-height: 16px; }
.cell { border: 1px solid; border-color: var(--shade) #fff #fff var(--shade); height: 16px; line-height: 15px; font-size: 12px; text-align: center; flex: none; white-space: nowrap; overflow: hidden; }
.cell svg { width: 14px; height: 14px; }
.cell .ar { width: 12px; height: 12px; margin-top: 2px; }
.c15 { width: 15px; } .c17 { width: 17px; } .c42 { width: 42px; } .c54 { width: 54px; } .c51 { width: 51px; } .c33 { width: 33px; } .cell.c56 { width: 56px; }
.two { font: bold 8px/7px "DejaVu Sans", sans-serif; }
.cell.two { line-height: 7px; }
.cell.cs { font-size: 10px; }
.hot { background: #f00; }
.cell i { display: block; width: 27px; height: 7px; background: #f00; }
.tabs { display: flex; margin-left: 2px; }
.tabs button { width: 44px; height: 16px; border: solid; border-width: 0 2px 1px 1px; border-color: #000 #000 #000 #fff; overflow: hidden; }
.tabs .cur { font-weight: bold; font-size: 12px; }
```
